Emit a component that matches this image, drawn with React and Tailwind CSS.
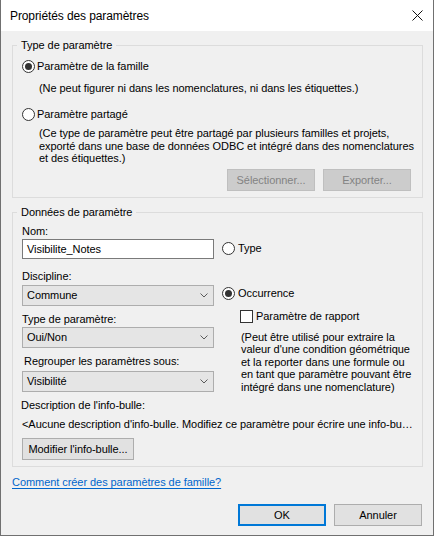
import React from "react";

function Radio({ checked }) {
  return (
    <span className="w-[13px] h-[13px] rounded-full border border-[#333333] bg-white flex items-center justify-center shrink-0">
      {checked && <span className="w-[7px] h-[7px] rounded-full bg-[#333333]" />}
    </span>
  );
}

function Chevron() {
  return (
    <svg width="8" height="5" viewBox="0 0 8 5" className="shrink-0">
      <polyline points="0.5,0.5 4,4 7.5,0.5" fill="none" stroke="#5a5a5a" strokeWidth="1" />
    </svg>
  );
}

function Select({ value, className }) {
  return (
    <div className={"h-[21px] border border-[#adadad] bg-[#e5e5e5] flex items-center justify-between pl-[4px] pr-[5px] " + className}>
      <span className="leading-[13px]">{value}</span>
      <Chevron />
    </div>
  );
}

function Btn({ children, className }) {
  return (
    <div className={"h-[22px] border border-[#adadad] bg-[#e1e1e1] flex items-center justify-center leading-[13px] " + className}>
      {children}
    </div>
  );
}

export default function App() {
  return (
    <div className="w-[434px] h-[536px] border-l border-r border-b border-[#707070] bg-[#f0f0f0] flex flex-col text-[11px] leading-[13px] tracking-[-0.06px] text-black font-['Liberation_Sans',Arial,sans-serif] overflow-hidden">
      <div className="h-[31px] bg-white flex items-center justify-between shrink-0">
        <span className="pl-[9px] text-[12px] leading-[31px] pt-[1px] tracking-[-0.1px]">Propriétés des paramètres</span>
        <svg width="11" height="11" viewBox="0 0 11 11" className="mr-[10px]">
          <path d="M0.5 0.5 L10.5 10.5 M10.5 0.5 L0.5 10.5" stroke="#111111" strokeWidth="1" fill="none" />
        </svg>
      </div>

      <fieldset className="ml-[11px] w-[411px] mt-[7px] border border-[#dcdcdc] pb-[6px] min-w-0">
        <legend className="ml-[4px] px-[4px] leading-[14px]">Type de paramètre</legend>
        <div className="ml-[9px] mt-[8px] flex items-center h-[13px]">
          <Radio checked />
          <span className="ml-[2px]">Paramètre de la famille</span>
        </div>
        <div className="ml-[26px] mt-[9px] whitespace-nowrap">
          (Ne peut figurer ni dans les nomenclatures, ni dans les étiquettes.)
        </div>
        <div className="ml-[9px] mt-[13px] flex items-center h-[13px]">
          <Radio />
          <span className="ml-[2px]">Paramètre partagé</span>
        </div>
        <div className="ml-[26px] mt-[6px] leading-[12.5px] whitespace-nowrap">
          (Ce type de paramètre peut être partagé par plusieurs familles et projets,
          <br />
          exporté dans une base de données ODBC et intégré dans des nomenclatures
          <br />
          et des étiquettes.)
        </div>
        <div className="mt-[4.5px] flex justify-end gap-[8px] pr-[11px]">
          <div className="w-[88px] h-[22px] border border-[#bfbfbf] bg-[#cccccc] text-[#838383] flex items-center justify-center">Sélectionner...</div>
          <div className="w-[88px] h-[22px] border border-[#bfbfbf] bg-[#cccccc] text-[#838383] flex items-center justify-center">Exporter...</div>
        </div>
      </fieldset>

      <fieldset className="ml-[11px] w-[411px] mt-[7px] border border-[#dcdcdc] pb-[6px] min-w-0">
        <legend className="ml-[4px] px-[4px] leading-[14px]">Données de paramètre</legend>
        <div className="flex ml-[9px] gap-[8px]">
          <div className="w-[192px] flex flex-col">
            <div className="mt-[6px]">Nom:</div>
            <div className="mt-[1px] h-[20px] border border-[#7a7a7a] bg-white px-[4px] flex items-center">Visibilite_Notes</div>
            <div className="mt-[11px]">Discipline:</div>
            <Select value="Commune" className="mt-[2px]" />
            <div className="mt-[7px]">Type de paramètre:</div>
            <Select value="Oui/Non" className="mt-[1px]" />
            <div className="mt-[7px] ml-[2px]">Regrouper les paramètres sous:</div>
            <Select value="Visibilité" className="mt-[3px]" />
          </div>
          <div className="flex flex-col">
            <div className="mt-[23px] flex items-center h-[13px]">
              <Radio />
              <span className="ml-[3px]">Type</span>
            </div>
            <div className="mt-[32px] flex items-center h-[13px]">
              <Radio checked />
              <span className="ml-[3px]">Occurrence</span>
            </div>
            <div className="mt-[10px] ml-[18px] flex items-center h-[13px]">
              <span className="w-[13px] h-[13px] border border-[#333333] bg-white shrink-0" />
              <span className="ml-[3px]">Paramètre de rapport</span>
            </div>
            <div className="mt-[8px] ml-[19px] leading-[12.4px] whitespace-nowrap">
              (Peut être utilisé pour extraire la
              <br />
              valeur d'une condition géométrique
              <br />
              et la reporter dans une formule ou
              <br />
              en tant que paramètre pouvant être
              <br />
              intégré dans une nomenclature)
            </div>
          </div>
        </div>
        <div className="ml-[8px] mt-[6px]">Description de l'info-bulle:</div>
        <div className="ml-[9px] mt-[6px] whitespace-nowrap">
          &lt;Aucune description d'info-bulle. Modifiez ce paramètre pour écrire une info-bu…
        </div>
        <Btn className="ml-[9px] mt-[7px] w-[112px]">Modifier l'info-bulle...</Btn>
      </fieldset>

      <div className="ml-[11px] mt-[9px] text-[#0066cc] underline underline-offset-[2px]">
        Comment créer des paramètres de famille?
      </div>

      <div className="mt-[15px] flex justify-end gap-[8px] pr-[11px]">
        <div className="w-[88px] h-[22px] border-2 border-[#0078d7] bg-[#e1e1e1] flex items-center justify-center">OK</div>
        <Btn className="w-[88px]">Annuler</Btn>
      </div>
    </div>
  );
}
